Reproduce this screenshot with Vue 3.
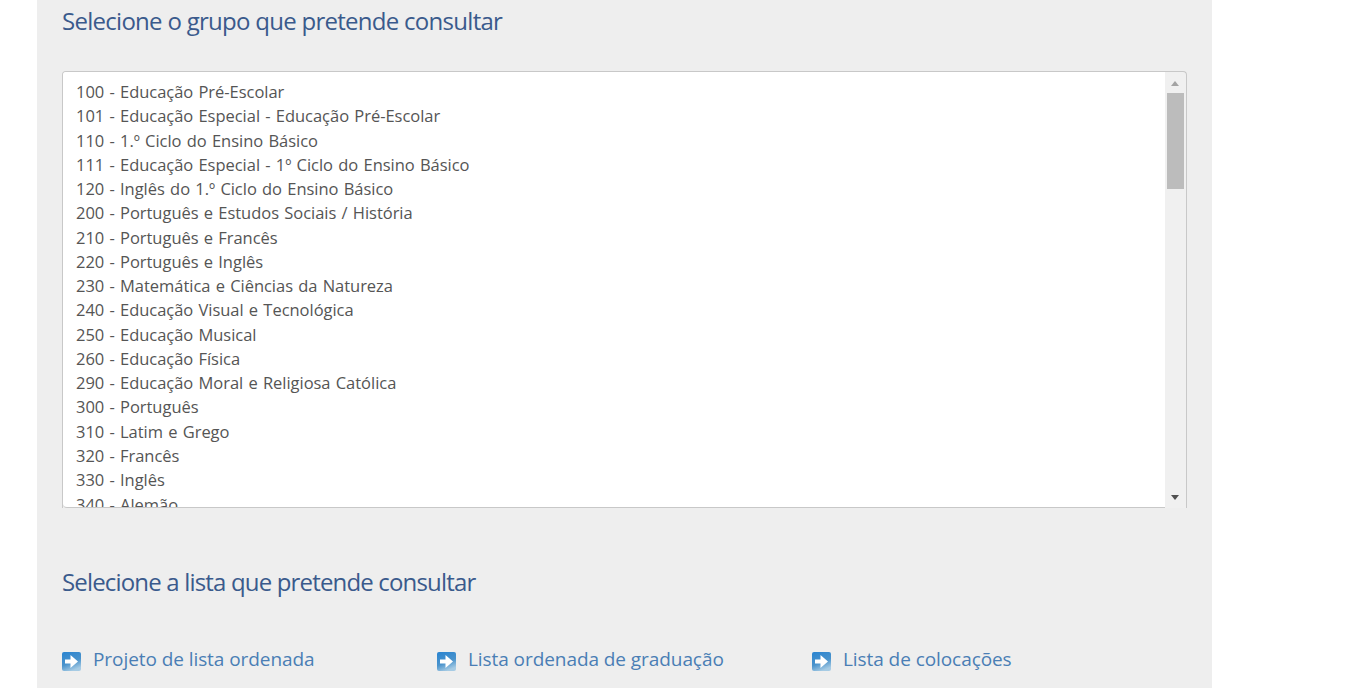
<script setup>
const groups = [
  '100 - Educação Pré-Escolar',
  '101 - Educação Especial - Educação Pré-Escolar',
  '110 - 1.º Ciclo do Ensino Básico',
  '111 - Educação Especial - 1º Ciclo do Ensino Básico',
  '120 - Inglês do 1.º Ciclo do Ensino Básico',
  '200 - Português e Estudos Sociais / História',
  '210 - Português e Francês',
  '220 - Português e Inglês',
  '230 - Matemática e Ciências da Natureza',
  '240 - Educação Visual e Tecnológica',
  '250 - Educação Musical',
  '260 - Educação Física',
  '290 - Educação Moral e Religiosa Católica',
  '300 - Português',
  '310 - Latim e Grego',
  '320 - Francês',
  '330 - Inglês',
  '340 - Alemão'
]

const lists = ['Projeto de lista ordenada', 'Lista ordenada de graduação', 'Lista de colocações']
</script>

<template>
  <div class="page">
    <main class="panel">
      <h2 class="title first">Selecione o grupo que pretende consultar</h2>

      <div class="listbox">
        <ul class="options">
          <li v-for="g in groups" :key="g">{{ g }}</li>
        </ul>
        <div class="scrollbar">
          <span class="arrow up"></span>
          <span class="thumb"></span>
          <span class="spacer"></span>
          <span class="arrow down"></span>
        </div>
      </div>

      <h2 class="title second">Selecione a lista que pretende consultar</h2>

      <div class="links">
        <a v-for="l in lists" :key="l" class="link" href="#">
          <svg class="icon" width="19" height="19" viewBox="0 0 19 19">
            <defs>
              <linearGradient id="tile" x1="0.1" y1="0" x2="0.5" y2="1">
                <stop offset="0" stop-color="#2a84d0" />
                <stop offset="0.6" stop-color="#4a93cc" />
                <stop offset="1" stop-color="#a6cbe4" />
              </linearGradient>
            </defs>
            <rect width="19" height="19" rx="2" fill="url(#tile)" />
            <path d="M3 7.5h5.5V3l7.5 6.5-7.5 6.5v-4.5H3z" fill="#fff" />
          </svg>
          <span>{{ l }}</span>
        </a>
      </div>
    </main>
  </div>
</template>

<style scoped>
.page {
  height: 688px;
  overflow: hidden;
  background: #fff;
  padding-left: 37px;
  font-family: "Open Sans", "Noto Sans", sans-serif;
}

.panel {
  width: 1175px;
  height: 688px;
  box-sizing: border-box;
  background: #eeeeee;
  padding: 0 25px;
}

.title {
  margin: 0;
  font-size: 24px;
  font-weight: 400;
  line-height: 32px;
  color: #3a5a8c;
}

.title.first {
  padding-top: 5px;
  height: 71px;
  box-sizing: border-box;
  letter-spacing: -0.72px;
}

.title.second {
  margin-top: 58px;
  letter-spacing: -0.83px;
}

.listbox {
  height: 437px;
  box-sizing: border-box;
  display: flex;
  border: 1px solid #c8c8c8;
  border-bottom: none;
  border-radius: 4px 4px 0 0;
  background: #f0f0f0;
}

.options {
  flex: 1;
  margin: 0;
  padding: 8px 12px 0 13px;
  list-style: none;
  background: #fff;
  border-bottom: 1px solid #c8c8c8;
  border-radius: 3px 0 0 4px;
  overflow: hidden;
  font-size: 16.5px;
  line-height: 24.27px;
  color: #555;
  word-spacing: 1px;
  letter-spacing: -0.03px;
}

.options li {
  white-space: nowrap;
}

.scrollbar {
  width: 21px;
  padding-right: 1px;
  box-sizing: border-box;
  display: flex;
  flex-direction: column;
  align-items: center;
}

.arrow {
  width: 0;
  height: 0;
  border-left: 4.5px solid transparent;
  border-right: 4.5px solid transparent;
}

.arrow.up {
  margin-top: 9px;
  border-bottom: 5px solid #a3a3a3;
}

.arrow.down {
  margin-bottom: 8px;
  border-top: 5px solid #505050;
}

.thumb {
  width: 17px;
  height: 96px;
  margin-top: 7px;
  background: #bcbcbc;
}

.spacer {
  flex: 1;
}

.links {
  margin-top: 48px;
  display: flex;
}

.link {
  width: 375px;
  display: flex;
  align-items: center;
  gap: 12px;
  color: #4a7eb5;
  font-size: 19px;
  line-height: 26px;
  text-decoration: none;
  letter-spacing: -0.07px;
}

.icon {
  flex: none;
  margin-top: 4px;
}
</style>

<style>
html, body { background: #fff; }
</style>
